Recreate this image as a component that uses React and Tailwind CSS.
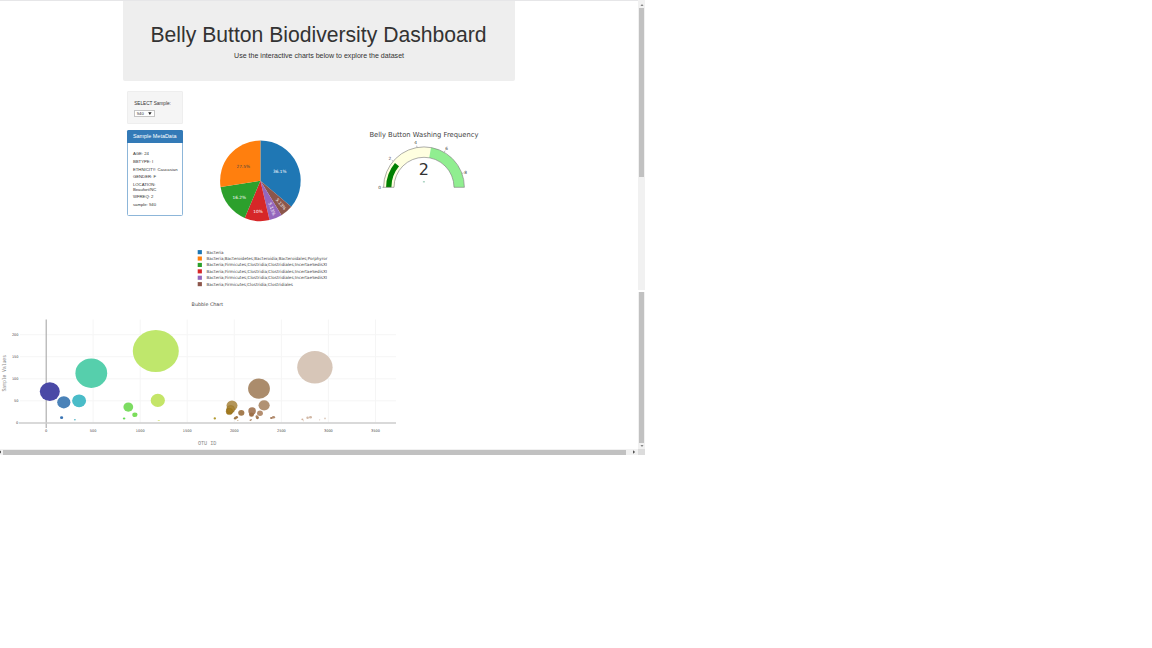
const PIE = { cx: 77.4, cy: 83.8, r: 40.3 };

const slices = [
  { value: 36.1, color: '#1f77b4', label: '36.1%', x: 96.7, y: 76.3, fill: '#fff', w: 13.5 },
  { value: 5.13, color: '#8c564b', label: '5.13%', x: 96.7, y: 108, fill: '#fff', w: 13.5, rotate: 51 },
  { value: 5.13, color: '#9467bd', label: '5.13%', x: 87.6, y: 112.6, fill: '#fff', w: 13.5, rotate: 69 },
  { value: 10, color: '#d62728', label: '10%', x: 75, y: 116.2, fill: '#fff', w: 9.5 },
  { value: 16.2, color: '#2ca02c', label: '16.2%', x: 56.2, y: 101.9, fill: '#fff', w: 13.5 },
  { value: 27.44, color: '#ff7f0e', label: '27.5%', x: 60.2, y: 70.6, fill: '#444', w: 13.5 },
];

const legend = [
  ['#1f77b4', 'Bacteria', 17],
  ['#ff7f0e', 'Bacteria;Bacteroidetes;Bacteroidia;Bacteroidales;Porphyror', 121],
  ['#2ca02c', 'Bacteria;Firmicutes;Clostridia;Clostridiales;IncertaeSedisXI', 120.5],
  ['#d62728', 'Bacteria;Firmicutes;Clostridia;Clostridiales;IncertaeSedisXI', 120.5],
  ['#9467bd', 'Bacteria;Firmicutes;Clostridia;Clostridiales;IncertaeSedisXI', 120.5],
  ['#8c564b', 'Bacteria;Firmicutes;Clostridia;Clostridiales', 86.5],
];

// x, y, rx, ry, colour
const bubbles = [
  [49.8, 391.6, 10, 9.3, '#4a49a6'],
  [63.8, 402.3, 6.6, 6.1, '#4a82b8'],
  [79.1, 400.8, 7, 6.4, '#4abcc8'],
  [91.3, 373.2, 15.9, 14.7, '#56cfac'],
  [155.8, 351, 23, 21, '#bfe76c'],
  [157.8, 400.4, 7.1, 6.6, '#c4e568'],
  [128.3, 407.1, 4.9, 4.6, '#7cdc62'],
  [134.9, 414.7, 2.6, 2.3, '#7bdd5b'],
  [61.6, 417.7, 1.6, 1.4, '#3a74b4'],
  [74.9, 419.8, 1, 0.8, '#65bccb'],
  [124.1, 418.5, 1.3, 1.1, '#65dd55'],
  [158.8, 420.5, 1.2, 0.6, '#dce98a'],
  [214.8, 418.4, 1.2, 1.1, '#b39b31'],
  [232, 405.6, 5.5, 5.2, '#b39558'],
  [230.6, 409.2, 4, 3.8, '#a98537'],
  [229.4, 411.4, 3.3, 3.2, '#a37b1f'],
  [241.3, 412.8, 3.1, 2.9, '#a57d50'],
  [259, 388.6, 10.9, 10.2, '#ab8c6c'],
  [252.1, 410.9, 3.8, 3.7, '#a98060'],
  [251.5, 414.6, 2.5, 2.2, '#9e7048'],
  [264.1, 405.3, 5.6, 5.1, '#b19273'],
  [260, 413.3, 2.9, 2.7, '#b48e70'],
  [257.4, 417.6, 1.5, 1.7, '#9e744e'],
  [256.8, 416.4, 1.2, 1.2, '#aa8360'],
  [235.2, 418.2, 1.3, 1.2, '#9b7640'],
  [236.6, 417.2, 1.4, 1.2, '#a2794a'],
  [237.8, 420.6, 0.7, 0.5, '#cbb089'],
  [250.5, 420.2, 1, 0.8, '#b38f70'],
  [251.2, 419.5, 0.7, 0.6, '#b38f70'],
  [271.4, 418, 1.4, 1.1, '#a67c5c'],
  [273.5, 417.2, 1.6, 1.3, '#b38d70'],
  [314.9, 367.3, 17.7, 16.3, '#d7c6b8'],
  [302.4, 419.4, 1, 0.8, '#d2b19c'],
  [303.5, 420.8, 0.6, 0.5, '#dec6b6'],
  [307.6, 417.7, 1.3, 1.2, '#d2b9a7'],
  [310.5, 417.2, 1.5, 1.2, '#d2b9a7'],
  [319.6, 419.8, 0.7, 0.6, '#e0cec2'],
  [325, 418.4, 1, 0.9, '#dfcfc3'],
];

function wedge(start, share) {
  const { cx, cy, r } = PIE;
  const at = (f) => [cx + r * Math.sin(f * 2 * Math.PI), cy - r * Math.cos(f * 2 * Math.PI)];
  const [x1, y1] = at(start);
  const [x2, y2] = at(start + share);
  return `M${cx} ${cy}L${x1} ${y1}A${r} ${r} 0 0 1 ${x2} ${y2}Z`;
}

// Ring segment between two gauge values on a 0-9 half circle
function ring(from, to, outer, inner) {
  const p = (v, r) => {
    const a = Math.PI * (1 - v / 9);
    return `${74 + r * Math.cos(a)} ${67.3 - r * Math.sin(a)}`;
  };
  return `M${p(from, outer)}A${outer} ${outer} 0 0 1 ${p(to, outer)}L${p(to, inner)}A${inner} ${inner} 0 0 0 ${p(from, inner)}Z`;
}

function Label({ x, y, size, w, fill = '#444', anchor = 'middle', rotate, children }) {
  return (
    <text
      x={x}
      y={y}
      fontSize={size}
      fill={fill}
      textAnchor={anchor}
      textLength={w}
      lengthAdjust="spacingAndGlyphs"
      transform={rotate ? `rotate(${rotate} ${x} ${y})` : undefined}
    >
      {children}
    </text>
  );
}

function PieChart() {
  let total = 0;
  return (
    <svg width="157" height="199" viewBox="0 0 157 199" className="block shrink-0 font-['DejaVu_Sans',sans-serif]">
      {slices.map((s) => {
        const start = total;
        total += s.value / 100;
        return <path key={s.color} d={wedge(start, s.value / 100)} fill={s.color} />;
      })}
      {slices.map((s) => (
        <Label key={s.color} x={s.x} y={s.y} size={4.3} w={s.w} fill={s.fill} rotate={s.rotate}>{s.label}</Label>
      ))}
      {legend.map(([color, name, w], i) => (
        <g key={color}>
          <rect x="14.7" y={153.1 + i * 6.4} width="4.2" height="4.1" fill={color} />
          <Label x={23.5} y={156.6 + i * 6.4} size={4.2} w={w} anchor="start">{name}</Label>
        </g>
      ))}
    </svg>
  );
}

function Gauge() {
  const ticks = [
    ['0', 29.7, 68.9, 34, 67.3, 32.3, 67.3],
    ['2', 39.8, 40.4, 43, 41.2, 41.7, 40.1],
    ['4', 65.5, 24.2, 67, 27.3, 66.7, 25.7],
    ['6', 96.7, 30.1, 94.3, 32.1, 95.1, 30.6],
    ['8', 115.7, 53.7, 112.1, 53.4, 113.7, 52.8],
  ];
  return (
    <svg width="148" height="80" viewBox="0 0 148 80" className="block shrink-0 font-['DejaVu_Sans',sans-serif]">
      <Label x={73.9} y={17.2} size={7} w={109}>Belly Button Washing Frequency</Label>
      <path d={ring(0, 5, 40.3, 30)} fill="#ffffe0" />
      <path d={ring(5, 9, 40.3, 30)} fill="#90ee90" />
      <path d={ring(0, 2, 37.9, 32.6)} fill="#008000" />
      <path d={ring(0, 9, 40.4, 30)} fill="none" stroke="#777" strokeWidth="0.6" />
      {ticks.map(([t, x, y, x1, y1, x2, y2]) => (
        <g key={t}>
          <line x1={x1} y1={y1} x2={x2} y2={y2} stroke="#777" strokeWidth="0.5" />
          <Label x={x} y={y} size={4.3}>{t}</Label>
        </g>
      ))}
      <Label x={73.9} y={55.4} size={16} fill="#333">2</Label>
      <rect x="72.9" y="61.4" width="2" height="0.9" fill="#79b99e" />
    </svg>
  );
}

function BubbleChart() {
  return (
    <svg width="638" height="153" viewBox="0 296 638 153" className="block shrink-0 font-['DejaVu_Sans',sans-serif]">
      <Label x={191.6} y={306.3} size={4.8} w={31.6} anchor="start">Bubble Chart</Label>
      {[93.1, 140.2, 187.2, 234.3, 281.4, 328.4, 375.5].map((x, i) => (
        <g key={x}>
          <line x1={x} x2={x} y1="319.5" y2="422.5" stroke="#f5f5f5" strokeWidth="1" />
          <Label x={x} y={431.6} size={3.6} w={i ? 8.8 : 6.6}>{(i + 1) * 500}</Label>
        </g>
      ))}
      {[334.7, 356.7, 378.8, 400.8].map((y, i) => (
        <g key={y}>
          <line x1="20" x2="396" y1={y} y2={y} stroke="#f5f5f5" strokeWidth="1" />
          <Label x={18.5} y={y + 1.3} size={3.6} w={i < 3 ? 6.6 : 4.4} anchor="end">{200 - i * 50}</Label>
        </g>
      ))}
      <Label x={46.1} y={431.6} size={3.6}>0</Label>
      <Label x={18.4} y={424.1} size={3.6} anchor="end">0</Label>
      <line x1="46.2" x2="46.2" y1="319.5" y2="428" stroke="#a8a8a8" strokeWidth="1.1" />
      <line x1="19" x2="396" y1="422.9" y2="422.9" stroke="#cccccc" strokeWidth="1.5" />
      {bubbles.map(([x, y, rx, ry, fill]) => (
        <ellipse key={`${x}-${y}`} cx={x} cy={y} rx={rx} ry={ry} fill={fill} />
      ))}
      <ellipse cx="230.6" cy="409.2" rx="4" ry="3.8" fill="none" stroke="#8f6d22" strokeWidth="0.4" />
      <ellipse cx="229.4" cy="411.4" rx="3.3" ry="3.2" fill="none" stroke="#8f6d22" strokeWidth="0.4" />
      <g className="font-['Liberation_Mono',monospace]">
        <Label x={207.2} y={445.2} size={4.8} w={18.5} fill="#888">OTU ID</Label>
        <Label x={5.8} y={373.3} size={4.8} w={36.5} fill="#888" rotate={-90}>Sample Values</Label>
      </g>
    </svg>
  );
}

const metadata = ['AGE: 24', 'BBTYPE: I', 'ETHNICITY: Caucasian', 'GENDER: F', 'LOCATION: Beaufort/NC', 'WFREQ: 2', 'sample: 940'];

function Sidebar() {
  return (
    <aside className="mt-[10.4px] ml-[127.4px] w-[55.6px] shrink-0 text-[4.25px] text-[#333]">
      <div className="h-[33px] rounded-[1px] border border-[#eeeeee] bg-[#f5f5f5] pt-[9px] pl-[5.8px]">
        <div className="text-[4.7px] leading-[6px] whitespace-nowrap">SELECT Sample:</div>
        <div className="mt-[2.3px] flex h-[7px] w-[20.5px] items-center justify-between border border-[#c4c4c4] bg-white px-[1.5px] leading-[5px]">
          <span>940</span>
          <svg width="4" height="3" viewBox="0 0 4 3"><path d="M0.2 0.2h3.4L1.9 2.9z" fill="#222" /></svg>
        </div>
      </div>
      <div className="mt-[6px] h-[86px] rounded-[1.5px] border border-[#8db6d9] bg-white">
        <div className="-mx-px -mt-px h-[13px] rounded-t-[1.5px] bg-[#337ab7] pl-[5.5px] text-[5.45px] leading-[13px] whitespace-nowrap text-white">Sample MetaData</div>
        <div className="flex flex-col gap-[3.1px] pt-[9px] pl-[4.5px]">
          {metadata.map((m) => (
            <p key={m} className={m.startsWith('LOC') ? 'w-[26px] leading-[4.6px]' : 'leading-[4.6px] whitespace-nowrap'}>{m}</p>
          ))}
        </div>
      </div>
    </aside>
  );
}

function Arrow({ className, d }) {
  return (
    <svg width="4" height="4" viewBox="0 0 4 4" className={className}>
      <path d={d} fill="#555" />
    </svg>
  );
}

export default function App() {
  return (
    <div className="h-[648px] w-[1152px] overflow-hidden bg-white font-['Liberation_Sans',Arial,sans-serif]">
      <div className="flex h-[455px] w-[645px]">
        <div className="flex w-[638px] shrink-0 flex-col">
          <div className="h-px shrink-0 bg-[#e6e6e8]" />
          <header className="ml-[122.7px] h-[80px] w-[392.7px] shrink-0 rounded-b-[2px] bg-[#eeeeee] pt-[21px] text-center text-[#333]">
            <h1 className="-ml-[1px] text-[21.15px] leading-[26px] whitespace-nowrap">Belly Button Biodiversity Dashboard</h1>
            <p className="mt-[3px] text-[7.07px] leading-[9px]">Use the interactive charts below to explore the dataset</p>
          </header>
          <main className="flex h-[215px] shrink-0">
            <Sidebar />
            <div className="mt-[16px]"><PieChart /></div>
            <div className="mt-[39px] ml-[10px]"><Gauge /></div>
          </main>
          <BubbleChart />
          <div className="flex h-[6px] shrink-0 items-center bg-[#f1f1f1]">
            <Arrow className="-ml-[2.5px] shrink-0" d="M3 0.5v3L1 2z" />
            <div className="ml-[1.5px] h-[5px] w-[623px] shrink-0 bg-[#c1c1c1]" />
            <Arrow className="ml-[6px] shrink-0" d="M1 0.3v3.4L3.2 2z" />
          </div>
        </div>
        <div className="flex w-[7px] shrink-0 flex-col items-center bg-[#f1f1f1]">
          <Arrow className="mt-[3px] shrink-0 opacity-70" d="M0.5 3h3L2 1z" />
          <div className="mt-[1px] h-[169.4px] w-[5.5px] shrink-0 bg-[#c1c1c1]" />
          <div className="mt-[112.6px] h-[2px] w-full shrink-0 bg-white" />
          <div className="h-[151px] w-[5.5px] shrink-0 bg-[#c1c1c1]" />
          <Arrow className="mt-px shrink-0 opacity-70" d="M0.5 1h3L2 3z" />
          <div className="mt-auto h-[6px] w-full shrink-0 bg-[#dcdcdc]" />
        </div>
      </div>
    </div>
  );
}
